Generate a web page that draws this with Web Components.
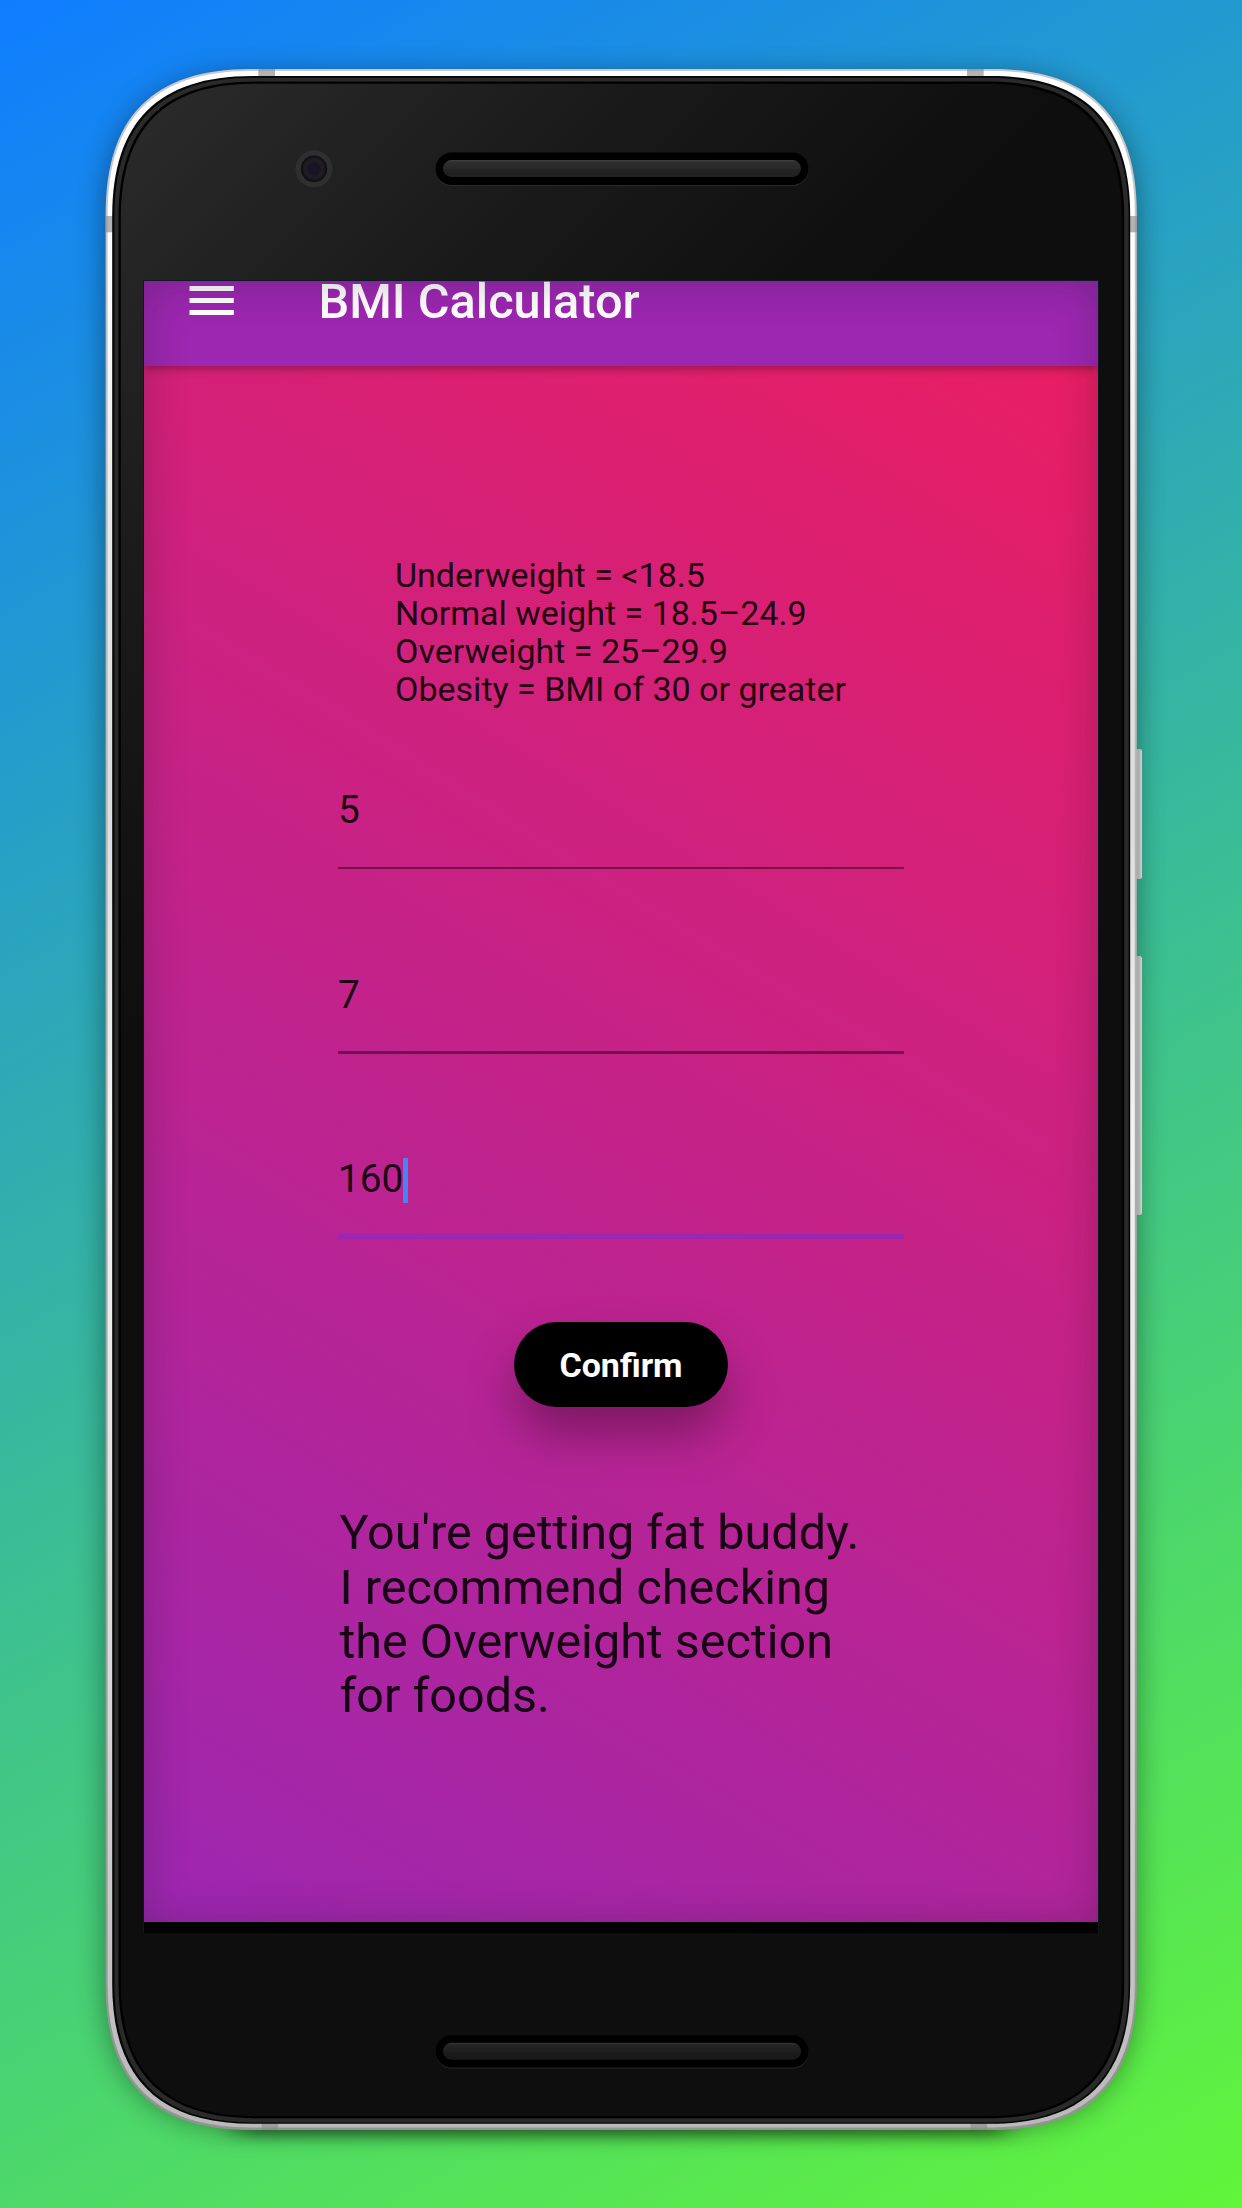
<!DOCTYPE html>
<html lang="en">
<head>
<meta charset="utf-8">
<title>BMI Calculator</title>
<style>
html,body{margin:0;padding:0}
body{width:1242px;height:2208px;overflow:hidden;font-family:Roboto,"Liberation Sans",sans-serif}
</style>
</head>
<body>
<phone-stage>
  <app-bar slot="screen">BMI Calculator</app-bar>
  <bmi-page slot="screen">
    <bmi-legend slot="legend">Underweight = &lt;18.5<br>Normal weight = 18.5–24.9<br>Overweight = 25–29.9<br>Obesity = BMI of 30 or greater</bmi-legend>
    <number-field slot="fields">5</number-field>
    <number-field slot="fields">7</number-field>
    <number-field slot="fields" active>160</number-field>
    <pill-button slot="action">Confirm</pill-button>
    <result-text slot="result">You're getting fat buddy.<br>I recommend checking<br>the Overweight section<br>for foods.</result-text>
  </bmi-page>
</phone-stage>
<script>
function define(name, html) {
  const t = document.createElement('template');
  t.innerHTML = html;
  customElements.define(name, class extends HTMLElement {
    constructor() {
      super();
      this.attachShadow({ mode: 'open' }).append(t.content.cloneNode(true));
    }
  });
}

/* Rounded body outline with softened, squircle-like corners */
function outline(l, t, r, b, e, k = 0.671) {
  const c = e * (1 - k);
  return `M${l + e} ${t}H${r - e}C${r - c} ${t} ${r} ${t + c} ${r} ${t + e}V${b - e}C${r} ${b - c} ${r - c} ${b} ${r - e} ${b}H${l + e}C${l + c} ${b} ${l} ${b - c} ${l} ${b - e}V${t + e}C${l} ${t + c} ${l + c} ${t} ${l + e} ${t}Z`;
}
const OUTER = outline(105.6, 69, 1136.8, 2130, 145);

define('phone-frame', `
<style>:host{display:block}svg{display:block}</style>
<svg width="1242" height="2208" viewBox="0 0 1242 2208">
  <defs>
    <linearGradient id="metal" x1="0" y1="0" x2="0" y2="1">
      <stop offset="0" stop-color="#fff"/><stop offset=".1" stop-color="#fdfdfd"/><stop offset=".22" stop-color="#e8e8e8"/>
      <stop offset=".36" stop-color="#dcdcdc"/><stop offset=".52" stop-color="#f4f4f4"/><stop offset=".75" stop-color="#dcdcdc"/><stop offset="1" stop-color="#b9b9b9"/>
    </linearGradient>
    <linearGradient id="edge" x1="0" y1="0" x2="0" y2="1">
      <stop offset="0" stop-color="#c9c9c9"/><stop offset="1" stop-color="#939393"/>
    </linearGradient>
    <linearGradient id="face" gradientUnits="userSpaceOnUse" x1="150" y1="100" x2="610" y2="560">
      <stop offset="0" stop-color="#2a2a2a"/><stop offset=".5" stop-color="#1a1a1a"/><stop offset=".9" stop-color="#101010"/><stop offset="1" stop-color="#0e0e0e"/>
    </linearGradient>
    <linearGradient id="bar" x1="0" y1="0" x2="0" y2="1">
      <stop offset="0" stop-color="#404040"/><stop offset=".15" stop-color="#2e2e2e"/><stop offset=".5" stop-color="#282828"/><stop offset=".6" stop-color="#222"/><stop offset="1" stop-color="#212121"/>
    </linearGradient>
    <linearGradient id="bar2" x1="0" y1="0" x2="0" y2="1">
      <stop offset="0" stop-color="#343434"/><stop offset=".15" stop-color="#242424"/><stop offset=".5" stop-color="#1f1f1f"/><stop offset=".6" stop-color="#1a1a1a"/><stop offset="1" stop-color="#191919"/>
    </linearGradient>
    <linearGradient id="key" x1="0" y1="0" x2="1" y2="0">
      <stop offset="0" stop-color="#b9b9b9"/><stop offset=".6" stop-color="#a8a8a8"/><stop offset=".8" stop-color="#b4b4b4"/><stop offset="1" stop-color="#d6d6d6"/>
    </linearGradient>
    <radialGradient id="lens"><stop offset="0" stop-color="#1c1630"/><stop offset=".35" stop-color="#17141d"/><stop offset=".7" stop-color="#211e26"/><stop offset="1" stop-color="#0c0b0e"/></radialGradient>
    <filter id="soft" x="-10%" y="-10%" width="120%" height="120%"><feGaussianBlur stdDeviation="15"/></filter>
    <filter id="tight" x="-10%" y="-200%" width="120%" height="500%"><feGaussianBlur stdDeviation="14 7"/></filter>
    <clipPath id="clip"><path d="${OUTER}"/></clipPath>
  </defs>
  <path d="${outline(106, 76, 1136, 2128, 145)}" filter="url(#soft)" opacity=".42"/>
  <rect x="236" y="2100" width="770" height="36" filter="url(#tight)" opacity=".45"/>
  <g fill="url(#key)">
    <rect x="1130" y="749" width="12" height="130" rx="2.5"/>
    <rect x="1130" y="956" width="12" height="259" rx="2.5"/>
  </g>
  <path d="${OUTER}" fill="url(#edge)"/>
  <path d="${outline(107.6, 71, 1134.8, 2127.4, 143)}" fill="url(#metal)"/>
  <g fill="#8a8a8a" opacity=".65" clip-path="url(#clip)">
    <rect x="258.3" y="69" width="16.7" height="9"/><rect x="967" y="69" width="16.7" height="9"/>
    <rect x="105" y="216" width="8" height="16.3"/><rect x="1129" y="216" width="8" height="16.3"/>
    <rect x="261.7" y="2122" width="16.5" height="8"/><rect x="970.5" y="2122" width="16.5" height="8"/>
  </g>
  <path d="${outline(112.2, 76, 1130.2, 2123.8, 140)}" fill="#050505"/>
  <path d="${outline(114.4, 77.8, 1128.6, 2122.4, 139)}" fill="#2a2a2a"/>
  <path d="${outline(118.5, 81.5, 1124.2, 2118.2, 136)}" fill="#000"/>
  <path d="${outline(120.8, 83.8, 1121.8, 2116.2, 134)}" fill="url(#face)"/>
  <circle cx="314" cy="168.8" r="18.5" fill="#2f2f2f"/>
  <circle cx="314" cy="168.8" r="13.2" fill="url(#lens)"/>
  <rect x="435.5" y="153.6" width="373" height="32.4" rx="16.2" fill="#2a2a2a"/>
  <rect x="435.5" y="152.6" width="373" height="32.4" rx="16.2"/>
  <rect x="443" y="160" width="358" height="17" rx="8.5" fill="url(#bar)"/>
  <rect x="435.5" y="2036.4" width="373" height="32.4" rx="16.2" fill="#222"/>
  <rect x="435.5" y="2035.2" width="373" height="32.4" rx="16.2"/>
  <rect x="443" y="2042.8" width="358" height="17" rx="8.5" fill="url(#bar2)"/>
</svg>`);

define('phone-stage', `
<style>
:host{display:grid;width:1242px;height:2208px;background:linear-gradient(150.64deg,#0f7dff,#61f53a)}
phone-frame,.holder{grid-area:1/1}
.holder{padding:280px 143px 275px 143px;display:grid}
.bezel{display:flex;flex-direction:column;background:#000;border:1px solid #0a1a22;border-bottom:0;overflow:hidden}
.screen{display:grid;grid-template-rows:1640.5px;overflow:hidden}
.content,.vignette{grid-area:1/1;min-width:0}
.content{display:flex;flex-direction:column}
.vignette{box-shadow:inset 0 2px 42px rgba(20,20,30,.25);z-index:2;pointer-events:none}
</style>
<phone-frame></phone-frame>
<div class="holder"><div class="bezel"><div class="screen">
  <div class="content"><slot name="screen"></slot></div><div class="vignette"></div>
</div></div></div>`);

define('app-bar', `
<style>
:host{display:flex;align-items:flex-end;flex:none;height:85px;box-sizing:border-box;padding:0 45px 37px;background:#9c27b0;color:#fff;
 font-size:48.7px;line-height:54px;font-weight:500;gap:84.5px;box-shadow:0 3px 8px rgba(0,0,0,.3);z-index:1}
svg{flex:none;margin-bottom:13px}
span{white-space:nowrap}
</style>
<svg width="45" height="30" viewBox="0 0 45 30" fill="#fff"><rect x=".5" y="0" width="44.3" height="5"/><rect x=".5" y="12" width="44.3" height="5"/><rect x=".5" y="24" width="44.3" height="5"/></svg>
<span><slot></slot></span>`);

define('bmi-page', `
<style>
:host{display:flex;flex-direction:column;align-items:center;flex:1;box-sizing:border-box;padding-top:190px;
 background:linear-gradient(31.54deg,#9c27b0,#e91e63);color:rgba(0,0,0,.87)}
.fields{display:flex;flex-direction:column;gap:102.65px;width:566px;margin:81px 0 81.7px}
.result{width:563px;margin-top:99.4px}
</style>
<slot name="legend"></slot>
<div class="fields"><slot name="fields"></slot></div>
<slot name="action"></slot>
<div class="result"><slot name="result"></slot></div>`);

define('bmi-legend', `
<style>:host{display:block;font-size:34.02px;line-height:38px;white-space:nowrap;padding-right:1px}</style><slot></slot>`);

define('number-field', `
<style>
:host{display:flex;flex-direction:column;justify-content:space-between;height:80px;margin-bottom:2px;font-size:38.8px;line-height:42.4px}
.value{display:flex;align-items:center}
.caret{display:none;width:5px;height:45px;margin-block:0 -3px;background:#4285f4}
.line{height:2.4px;background:rgba(0,0,0,.42)}
:host([active]){height:80.8px;margin-bottom:1.2px}
:host([active]) .caret{display:block}
:host([active]) .line{height:5px;background:#9c27b0}
</style>
<div class="value"><span><slot></slot></span><i class="caret"></i></div><div class="line"></div>`);

define('pill-button', `
<style>
:host{display:flex;align-items:center;justify-content:center;flex:none;width:214px;height:85px;box-sizing:border-box;padding-top:1.5px;border-radius:43px;background:#000;color:#fff;
 font-size:34px;line-height:38px;font-weight:700;box-shadow:0 28px 50px -2px rgba(0,0,0,.34)}
</style><slot></slot>`);

define('result-text', `
<style>:host{display:block;font-size:48.5px;line-height:54.35px;white-space:nowrap}</style><slot></slot>`);
</script>
</body>
</html>
